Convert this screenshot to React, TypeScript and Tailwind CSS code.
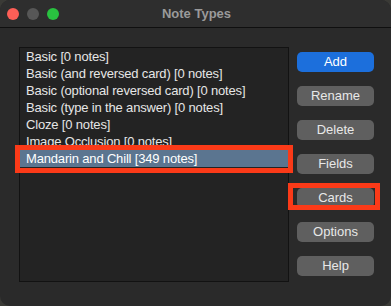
const noteTypes = [
  "Basic [0 notes]",
  "Basic (and reversed card) [0 notes]",
  "Basic (optional reversed card) [0 notes]",
  "Basic (type in the answer) [0 notes]",
  "Cloze [0 notes]",
  "Image Occlusion [0 notes]",
  "Mandarin and Chill [349 notes]",
];

const buttons = ["Add", "Rename", "Delete", "Fields", "Cards", "Options", "Help"];

export default function App() {
  return (
    <div className="w-[391px] h-[306px] bg-[#3a3a36] overflow-hidden" style={{ fontFamily: '"Liberation Sans", Arial, sans-serif' }}>
      <div className="relative w-full h-full bg-[#2a2a2a] rounded-[10px] overflow-hidden flex flex-col">
        {/* Title bar */}
        <div className="relative h-[28px] bg-[#2e2e2e] border-b border-[#0f0f0f] flex items-center justify-center shrink-0">
          <div className="absolute left-[7px] top-[8px] flex gap-[8px]">
            <div className="w-[12px] h-[12px] rounded-full bg-[#fe5f57]" />
            <div className="w-[12px] h-[12px] rounded-full bg-[#575757]" />
            <div className="w-[12px] h-[12px] rounded-full bg-[#29c240]" />
          </div>
          <span className="text-[13px] font-bold text-[#9a9a9a] ml-[2px]">Note Types</span>
        </div>

        {/* Body */}
        <div className="flex pl-[19px] pt-[19px] gap-[8px]">
          {/* List */}
          <div className="w-[270px] h-[235px] bg-[#232323] border border-[#121212] overflow-hidden">
            {noteTypes.map((t, i) => (
              <div
                key={t}
                className={`h-[17px] leading-[17px] pl-[6px] text-[13px] tracking-[-0.17px] whitespace-nowrap ${
                  i === 6 ? "bg-[#5b7590] text-white" : "text-[#e6e6e6]"
                }`}
              >
                {t}
              </div>
            ))}
          </div>

          {/* Buttons */}
          <div className="flex flex-col gap-[14px] pt-[5px]">
            {buttons.map((b, i) => (
              <button
                key={b}
                className={`w-[77px] h-[20px] rounded-[5px] text-[13px] leading-[20px] text-center ${
                  i === 0 ? "bg-[#1c6fdc] text-white" : "bg-[#5f5f5f] text-[#e8e8e8]"
                }`}
              >
                {b}
              </button>
            ))}
          </div>
        </div>

        {/* Highlight annotations */}
        <div className="absolute left-[15px] top-[145px] w-[278px] h-[28px] border-[5px] border-[#fb3a18]" />
        <div className="absolute left-[288px] top-[183px] w-[92px] h-[27px] border-[5px] border-[#fb3a18]" />
      </div>
    </div>
  );
}
